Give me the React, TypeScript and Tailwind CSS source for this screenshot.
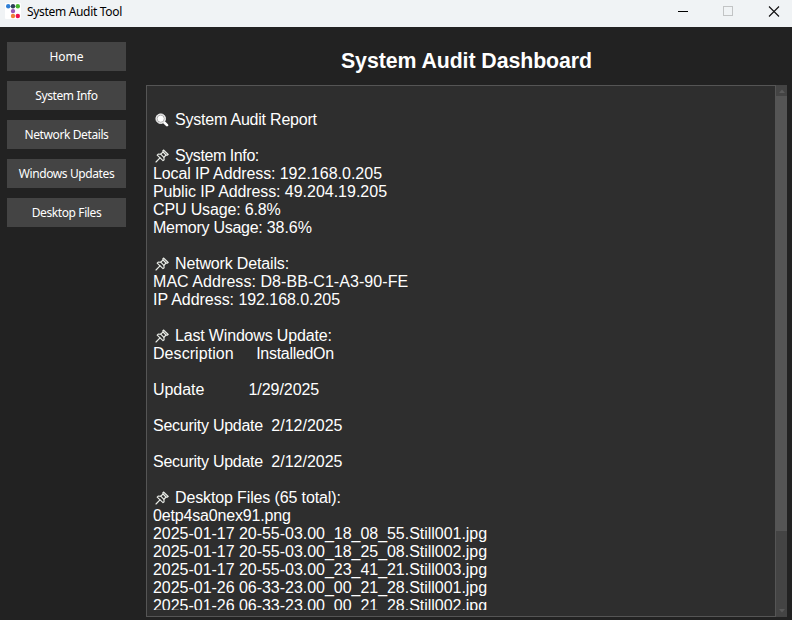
import type { ReactNode } from "react";

const navItems = [
  { label: "Home", tracking: "tracking-normal" },
  { label: "System Info", tracking: "tracking-[-0.4px]" },
  { label: "Network Details", tracking: "tracking-[-0.4px]" },
  { label: "Windows Updates", tracking: "tracking-[-0.4px]" },
  { label: "Desktop Files", tracking: "tracking-[-0.4px]" },
];

function AppIcon() {
  return (
    <svg width="16" height="16" viewBox="0 0 16 16">
      <rect width="16" height="16" rx="1" fill="#fff" />
      <circle cx="3.2" cy="3.2" r="2.2" fill="#2f7fd6" />
      <circle cx="8" cy="3.2" r="2.2" fill="#2e4057" />
      <circle cx="12.8" cy="3.2" r="2.2" fill="#45b52d" />
      <circle cx="8" cy="8.1" r="2.2" fill="#9b59b6" />
      <circle cx="8" cy="13" r="2.2" fill="#f0813a" />
      <circle cx="12.8" cy="13" r="2.2" fill="#f0124c" />
    </svg>
  );
}

function Magnifier() {
  return (
    <svg width="14" height="14" viewBox="0 0 14 14" className="mt-[2px]">
      <path d="M8.8 9 12 12.2" stroke="#fff" strokeWidth="2.6" strokeLinecap="round" />
      <circle cx="5.7" cy="5.7" r="4.8" fill="#fff" stroke="#e8e8e8" />
      <circle cx="5.7" cy="5.7" r="3.6" fill="none" stroke="#8d8d8d" strokeWidth=".7" />
    </svg>
  );
}

function Pin() {
  return (
    <svg width="14" height="14" viewBox="0 0 14 14" className="mt-[2px]" fill="none" stroke="#e8ebe6" strokeWidth="1.15" strokeLinejoin="round" strokeLinecap="round">
      <path d="M8.5 1 13.2 5.5 12 6.3 11 6 8.9 8.3 9.1 10.7 8 11.6 2.2 6.2 3.2 5.1 5.7 5.2 8.1 3 7.8 1.9Z" />
      <path d="M5 8.9 1 13M5.7 5.2 8.9 8.3M8.1 3 11 6" />
    </svg>
  );
}

type Line = { text: string; icon?: ReactNode; tracking?: string; tail?: string; tailTracking?: string };

const lines: Line[] = [
  { text: "" },
  { text: "System Audit Report", icon: <Magnifier />, tracking: "tracking-[-0.21px]" },
  { text: "" },
  { text: "System Info:", icon: <Pin />, tracking: "tracking-[-0.42px]" },
  { text: "Local IP Address: ", tracking: "tracking-[-0.11px]", tail: "192.168.0.205" },
  { text: "Public IP Address: ", tracking: "tracking-[-0.12px]", tail: "49.204.19.205" },
  { text: "CPU Usage: 6.8%", tracking: "tracking-[-0.15px]" },
  { text: "Memory Usage: ", tracking: "tracking-[-0.26px]", tail: "38.6%", tailTracking: "tracking-[-0.06px]" },
  { text: "" },
  { text: "Network Details:", icon: <Pin />, tracking: "tracking-[-0.16px]" },
  { text: "MAC Address: D8-BB-C1-A3-90-FE", tracking: "tracking-[0.06px]" },
  { text: "IP Address: 192.168.0.205", tracking: "tracking-[-0.05px]" },
  { text: "" },
  { text: "Last Windows Update:", icon: <Pin />, tracking: "tracking-[-0.17px]" },
  { text: "Description     ", tracking: "tracking-[0.06px]", tail: "InstalledOn", tailTracking: "tracking-[-0.3px]" },
  { text: "" },
  { text: "Update          1/29/2025", tracking: "tracking-[-0.04px]" },
  { text: "" },
  { text: "Security Update  ", tracking: "tracking-[-0.26px]", tail: "2/12/2025" },
  { text: "" },
  { text: "Security Update  ", tracking: "tracking-[-0.26px]", tail: "2/12/2025" },
  { text: "" },
  { text: "Desktop Files (65 total):", icon: <Pin />, tracking: "tracking-[-0.13px]" },
  { text: "0etp4sa0nex91.png", tracking: "tracking-[-0.17px]" },
  { text: "2025-01-17 20-55-03.00_18_08_55.Still001.jpg", tracking: "tracking-[-0.03px]" },
  { text: "2025-01-17 20-55-03.00_18_25_08.Still002.jpg", tracking: "tracking-[-0.03px]" },
  { text: "2025-01-17 20-55-03.00_23_41_21.Still003.jpg", tracking: "tracking-[-0.03px]" },
  { text: "2025-01-26 06-33-23.00_00_21_28.Still001.jpg", tracking: "tracking-[-0.03px]" },
  { text: "2025-01-26 06-33-23.00_00_21_28.Still002.jpg", tracking: "tracking-[-0.03px]" },
];

function TitleBar() {
  return (
    <header className="flex h-[27px] shrink-0 items-start bg-[#f0f3f5] text-black">
      <div className="ml-[5px] mt-[3px]"><AppIcon /></div>
      <span className="ml-[6px] mt-[3px] flex-1 text-[12px] leading-[18px] tracking-[-0.32px]">System Audit Tool</span>
      <svg width="120" height="24" viewBox="0 0 120 24" fill="none" className="shrink-0">
        <path d="M6 11.5H16" stroke="#000" />
        <rect x="51.5" y="6.5" width="9" height="9" stroke="#c2c4c5" />
        <path d="M97 6.5 107 16.5M107 6.5 97 16.5" stroke="#111" strokeWidth="1.1" />
      </svg>
    </header>
  );
}

function Scrollbar() {
  return (
    <div className="flex w-[11px] flex-col bg-[#444]">
      <div className="flex h-[11px] items-center justify-center">
        <svg width="6" height="4"><path d="M0 4 3 0.5 6 4Z" fill="#5a5a5a" /></svg>
      </div>
      <div className="h-[435px] bg-[#555]" />
      <div className="flex flex-1 items-end justify-center pb-1">
        <svg width="6" height="4"><path d="M0 0 3 3.5 6 0Z" fill="#5a5a5a" /></svg>
      </div>
    </div>
  );
}

export default function App() {
  return (
    <div className="flex h-[620px] w-[792px] flex-col overflow-hidden bg-[#222] font-['Noto_Sans',sans-serif] text-white">
      <TitleBar />
      <div className="flex min-h-0 flex-1">
        <nav className="flex w-[146px] shrink-0 flex-col gap-[10px] pl-[7px] pr-5 pt-[15px]">
          {navItems.map((item) => (
            <button key={item.label} className={`h-[29px] bg-[#444] text-[12px] leading-[29px] ${item.tracking}`}>
              {item.label}
            </button>
          ))}
        </nav>
        <main className="flex min-w-0 flex-1 flex-col pb-[3px] pr-[5px] font-['Liberation_Sans',sans-serif]">
          <h1 className="h-[58px] pt-[20px] text-center text-[21.33px] font-bold leading-[28px] tracking-[-0.08px]">System Audit Dashboard</h1>
          <div className="flex min-h-0 flex-1">
            <section className="min-w-0 flex-1 border border-[#555] bg-[#2e2e2e] px-[6px] pb-[6px] pt-[7px]">
              <div className="h-full overflow-hidden text-[16px] leading-[18px]">
                {lines.map((line, i) => (
                  <div key={i} className="flex h-[18px] whitespace-pre">
                    {line.icon && <span className="ml-[2px] mr-[6px] flex w-[14px]">{line.icon}</span>}
                    <span className={line.tracking}>{line.text}</span>
                    {line.tail && <span className={line.tailTracking}>{line.tail}</span>}
                  </div>
                ))}
              </div>
            </section>
            <Scrollbar />
          </div>
        </main>
      </div>
    </div>
  );
}
